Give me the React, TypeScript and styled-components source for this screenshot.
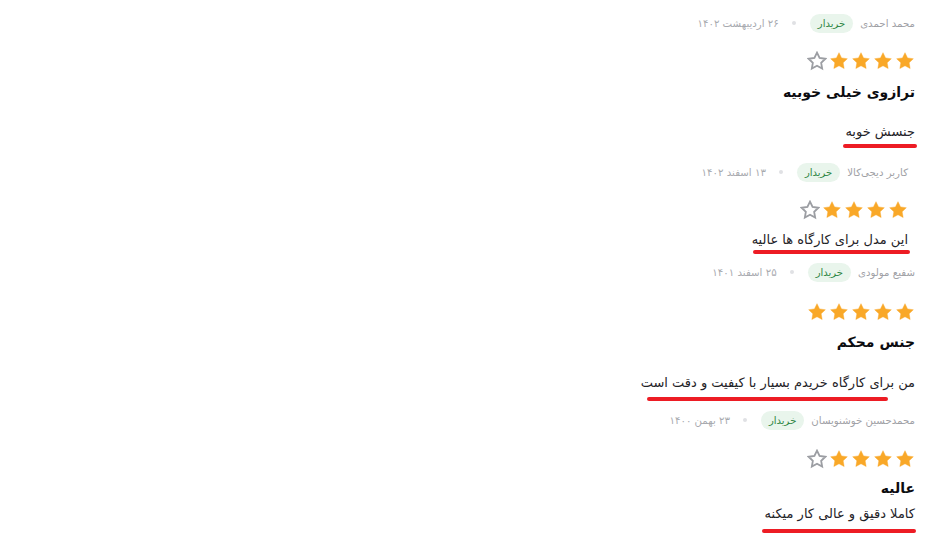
import styled, { createGlobalStyle } from "styled-components";

const GlobalStyle = createGlobalStyle`
    body {
        margin: 0;
        background: #fff;
        font-family: "DejaVu Sans", "Noto Sans", sans-serif;
    }
`;

const Page = styled.div`
    direction: rtl;
    width: 934px;
    height: 554px;
    box-sizing: border-box;
    overflow: hidden;
    padding: 12px 19px 0 0;
    display: flex;
    flex-direction: column;
    align-items: flex-start;
`;

const ReviewItem = styled.div<{ $inset: number; $top: number }>`
    display: flex;
    flex-direction: column;
    align-items: flex-start;
    margin-right: ${(p) => p.$inset}px;
    margin-top: ${(p) => p.$top}px;
`;

const Meta = styled.div`
    display: flex;
    align-items: center;
    height: 20px;
    font-size: 10.2px;
    color: #9fa1a6;
    white-space: nowrap;
`;

const Name = styled.span`
    margin-left: 7px;
`;

const Badge = styled.span`
    display: flex;
    align-items: center;
    height: 19px;
    padding: 0 8px;
    border-radius: 10px;
    background: #e9f5ec;
    color: #2f8644;
    font-size: 10px;
`;

const Dot = styled.span`
    width: 4px;
    height: 4px;
    border-radius: 50%;
    background: #e0e1e4;
    margin: 0 14px 0 13px;
`;

const DateText = styled.span`
    color: #a8aaaf;
`;

const Stars = styled.div<{ $top: number }>`
    display: flex;
    gap: 2px;
    height: 20px;
    margin-top: ${(p) => p.$top}px;
`;

const Title = styled.div<{ $top: number }>`
    margin-top: ${(p) => p.$top}px;
    font-size: 14px;
    font-weight: bold;
    line-height: 24px;
    color: #0c0c10;
`;

const Body = styled.div<{ $top: number }>`
    margin-top: ${(p) => p.$top}px;
    font-size: 13px;
    line-height: 20px;
    color: #1f2328;
    white-space: nowrap;
`;

const Underline = styled.div<{ $top: number; $inset: number; $width: number }>`
    margin-top: ${(p) => p.$top}px;
    margin-right: ${(p) => p.$inset}px;
    width: ${(p) => p.$width}px;
    height: 4px;
    border-radius: 2px;
    background: #ed1c24;
`;

const Star = ({ filled }: { filled: boolean }) => (
    <svg width="20" height="20" viewBox="0 0 24 24">
        <path
            d="M12 2l3.09 6.26L22 9.27l-5 4.87 1.18 6.88L12 17.77l-6.18 3.25L7 14.14 2 9.27l6.91-1.01L12 2z"
            fill={filled ? "#f9a828" : "none"}
            stroke={filled ? "#f9a828" : "#9c9ea3"}
            strokeWidth={filled ? 0.5 : 2.2}
            strokeLinejoin="miter"
        />
    </svg>
);

interface ReviewData {
    name: string;
    date: string;
    rating: number;
    title?: string;
    body: string;
    inset: number;
    top: number;
    starsTop: number;
    titleTop?: number;
    bodyTop: number;
    line: { top: number; inset: number; width: number };
}

const reviews: ReviewData[] = [
    {
        name: "محمد احمدی",
        date: "۲۶ اردیبهشت ۱۴۰۲",
        rating: 4,
        title: "ترازوی خیلی خوبیه",
        body: "جنسش خوبه",
        inset: 0,
        top: 1,
        starsTop: 18,
        titleTop: 9,
        bodyTop: 18,
        line: { top: 2, inset: -2, width: 74 },
    },
    {
        name: "کاربر دیجی‌کالا",
        date: "۱۳ اسفند ۱۴۰۲",
        rating: 4,
        body: "این مدل برای کارگاه ها عالیه",
        inset: 7,
        top: 14,
        starsTop: 18,
        bodyTop: 10,
        line: { top: 0, inset: -2, width: 157 },
    },
    {
        name: "شفیع مولودی",
        date: "۲۵ اسفند ۱۴۰۱",
        rating: 5,
        title: "جنس محکم",
        body: "من برای کارگاه خریدم بسیار با کیفیت و دقت است",
        inset: 0,
        top: 8,
        starsTop: 20,
        titleTop: 8,
        bodyTop: 19,
        line: { top: 4, inset: 27, width: 241 },
    },
    {
        name: "محمدحسین خوشنویسان",
        date: "۲۳ بهمن ۱۴۰۰",
        rating: 4,
        title: "عالیه",
        body: "کاملا دقیق و عالی کار میکنه",
        inset: 0,
        top: 9,
        starsTop: 19,
        titleTop: 7,
        bodyTop: 4,
        line: { top: 5, inset: -1, width: 154 },
    },
];

const App = () => {
    return (
        <>
            <GlobalStyle />
            <Page>
                {reviews.map((r) => (
                    <ReviewItem key={r.name} $inset={r.inset} $top={r.top}>
                        <Meta>
                            <Name>{r.name}</Name>
                            <Badge>خریدار</Badge>
                            <Dot />
                            <DateText>{r.date}</DateText>
                        </Meta>
                        <Stars $top={r.starsTop}>
                            {[0, 1, 2, 3, 4].map((i) => (
                                <Star key={i} filled={i < r.rating} />
                            ))}
                        </Stars>
                        {r.title && <Title $top={r.titleTop ?? 0}>{r.title}</Title>}
                        <Body $top={r.bodyTop}>{r.body}</Body>
                        <Underline
                            $top={r.line.top}
                            $inset={r.line.inset}
                            $width={r.line.width}
                        />
                    </ReviewItem>
                ))}
            </Page>
        </>
    );
};

export default App;
